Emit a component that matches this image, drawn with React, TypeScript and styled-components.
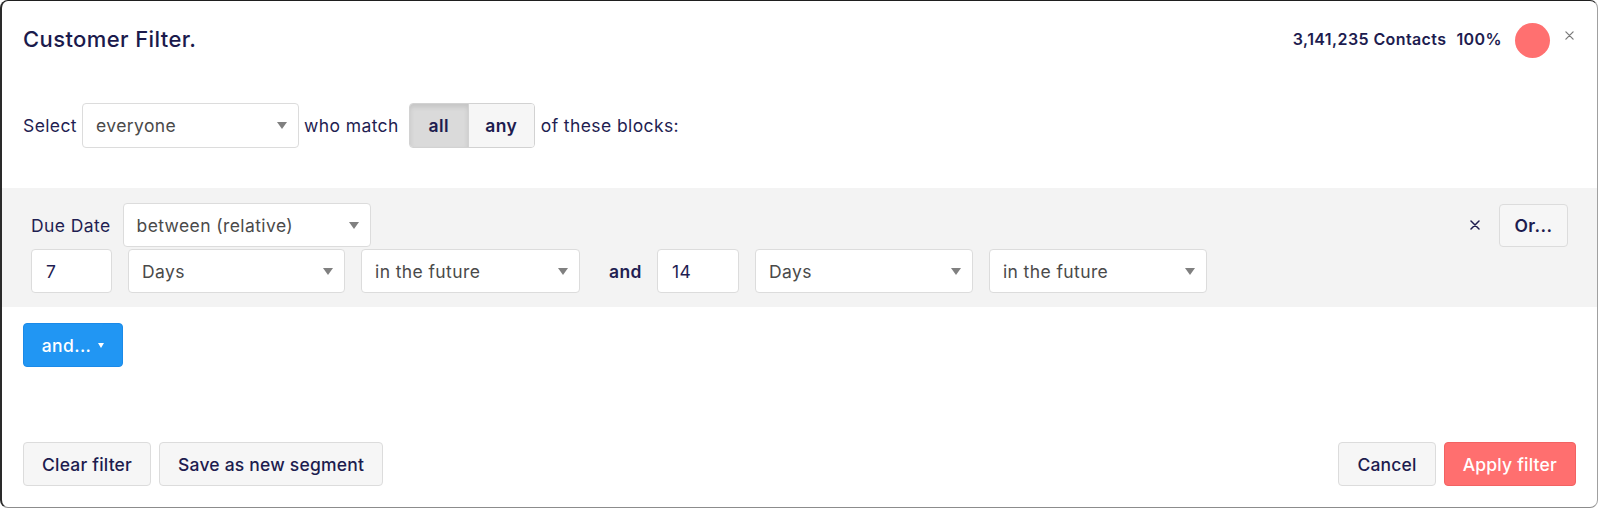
import React from 'react';
import styled, { createGlobalStyle } from 'styled-components';

const GlobalStyle = createGlobalStyle`
	html, body {
		margin: 0;
		padding: 0;
		background: #ffffff;
	}
	body {
		font-family: Inter, 'Liberation Sans', sans-serif;
		color: #1d1c4f;
		-webkit-font-smoothing: antialiased;
	}
	* {
		box-sizing: border-box;
	}
`;

const Modal = styled.div`
	height: calc(100vh - 1px);
	margin-right: 2px;
	background: #fff;
	border-style: solid;
	border-width: 1px 1px 1px 2px;
	border-color: #1f1f1f #a0a0a0 #8c8c8c #2a2a2a;
	border-radius: 8px;
	display: flex;
	flex-direction: column;
	letter-spacing: 0.4px;
`;

const Header = styled.div`
	height: 75px;
	padding: 0 23px 0 21px;
	display: flex;
	align-items: center;
	justify-content: space-between;
`;

const Title = styled.h1`
	margin: 0;
	font-size: 22px;
	font-weight: 500;
	color: #1b1a4c;
`;

const Stats = styled.div`
	display: flex;
	align-items: center;
	height: 100%;
	font-size: 16px;
	font-weight: 600;
`;

const Percent = styled.span`
	margin-left: 10px;
`;

const Dot = styled.span`
	width: 35px;
	height: 35px;
	border-radius: 50%;
	background: #ff7070;
	margin-left: 13px;
	margin-top: 3px;
`;

const CloseIcon = styled.svg`
	align-self: flex-start;
	margin: 30px 0 0 15px;
	display: block;
`;

const MatchRow = styled.div`
	margin-top: 27px;
	padding: 0 21px;
	display: flex;
	align-items: center;
	gap: 5px;
	font-size: 17.5px;
`;

const Label = styled.span<{ $bold?: boolean }>`
	font-size: 17.5px;
	font-weight: ${(props) => (props.$bold ? 600 : 400)};
	color: #1f1e52;
	white-space: nowrap;
`;

const SelectBox = styled.div<{ $width: number; $height?: number }>`
	width: ${(props) => props.$width}px;
	height: ${(props) => props.$height || 44}px;
	flex-shrink: 0;
	background: #fff;
	border: 1px solid #dcdcdc;
	border-radius: 4px;
	padding: 0 11px 0 13px;
	display: flex;
	align-items: center;
	justify-content: space-between;
	font-size: 17.5px;
	color: #4a4a4a;
`;

const Caret = styled.span<{ $color?: string; $size?: number }>`
	width: 0;
	height: 0;
	border-left: ${(props) => props.$size || 5}px solid transparent;
	border-right: ${(props) => props.$size || 5}px solid transparent;
	border-top: ${(props) => (props.$size || 5) + 2}px solid ${(props) => props.$color || '#808080'};
`;

const Toggle = styled.div`
	display: flex;
	height: 45px;
	margin: 0 1px 0 5px;
	border: 1px solid #d2d2d2;
	border-radius: 4px;
	overflow: hidden;
`;

const ToggleItem = styled.div<{ $active?: boolean; $width: number }>`
	width: ${(props) => props.$width}px;
	display: flex;
	align-items: center;
	justify-content: center;
	font-size: 17.5px;
	font-weight: 600;
	background: ${(props) => (props.$active ? '#dadada' : '#f6f6f6')};
	box-shadow: ${(props) => (props.$active ? 'inset 0 3px 5px rgba(0,0,0,0.1)' : 'none')};
	& + & {
		border-left: 1px solid #d2d2d2;
	}
`;

const Block = styled.div`
	margin-top: 40px;
	background: #f3f3f3;
	padding: 15px 29px 14px 29px;
`;

const BlockHeader = styled.div`
	display: flex;
	align-items: center;
	gap: 12px;
`;

const BlockActions = styled.div`
	margin-left: auto;
	display: flex;
	align-items: center;
	gap: 19px;
`;

const ValueRow = styled.div`
	margin-top: 2px;
	display: flex;
	align-items: center;
	gap: 16px;
`;

const NumberInput = styled.div<{ $width: number }>`
	width: ${(props) => props.$width}px;
	height: 44px;
	background: #fff;
	border: 1px solid #dcdcdc;
	border-radius: 4px;
	padding-left: 14px;
	display: flex;
	align-items: center;
	font-size: 17.5px;
	color: #1f1e52;
`;

const AndLabel = styled(Label)`
	margin: 0 -1px 0 13px;
`;

const Button = styled.button<{ $primary?: boolean }>`
	height: 44px;
	padding: 0 18px;
	border-radius: 4px;
	border: 1px solid ${(props) => (props.$primary ? '#f26262' : '#dcdcdc')};
	background: ${(props) => (props.$primary ? '#ff6f6f' : '#f6f6f6')};
	color: ${(props) => (props.$primary ? '#fff' : '#1d1c4f')};
	font-family: inherit;
	font-size: 17.5px;
	font-weight: 500;
	letter-spacing: 0.2px;
	cursor: pointer;
	white-space: nowrap;
`;

const OrButton = styled(Button)`
	width: 69px;
	height: 43px;
	padding: 0;
	font-weight: 600;
	letter-spacing: 0.4px;
`;

const AddButton = styled.button`
	margin: 16px 0 0 21px;
	width: 100px;
	height: 44px;
	border-radius: 4px;
	border: 1px solid #1b8ae8;
	background: #2196f3;
	color: #fff;
	font-family: inherit;
	font-size: 17.5px;
	font-weight: 500;
	letter-spacing: 0.4px;
	display: flex;
	align-items: center;
	justify-content: center;
	gap: 7px;
	cursor: pointer;
`;

const Footer = styled.div`
	margin-top: auto;
	padding: 0 21px 21px 21px;
	display: flex;
	justify-content: space-between;
`;

const ButtonGroup = styled.div`
	display: flex;
	gap: 8px;
`;

function Cross({ size, color, width }: { size: number; color: string; width: number }) {
	return (
		<svg width={size} height={size} viewBox="0 0 10 10">
			<path d="M1 1 L9 9 M9 1 L1 9" stroke={color} strokeWidth={width} strokeLinecap="round" />
		</svg>
	);
}

function Select({ value, width }: { value: string; width: number }) {
	return (
		<SelectBox $width={width}>
			<span>{value}</span>
			<Caret />
		</SelectBox>
	);
}

export default function App() {
	return (
		<>
			<GlobalStyle />
			<Modal>
				<Header>
					<Title>Customer Filter.</Title>
					<Stats>
						<span>3,141,235 Contacts</span>
						<Percent>100%</Percent>
						<Dot />
						<CloseIcon width="9" height="9" viewBox="0 0 10 10">
							<path d="M1 1 L9 9 M9 1 L1 9" stroke="#7a7a7a" strokeWidth="1.4" strokeLinecap="round" />
						</CloseIcon>
					</Stats>
				</Header>

				<MatchRow>
					<Label>Select</Label>
					<SelectBox $width={217} $height={45}>
						<span>everyone</span>
						<Caret />
					</SelectBox>
					<Label>who match</Label>
					<Toggle>
						<ToggleItem $active $width={58}>all</ToggleItem>
						<ToggleItem $width={66}>any</ToggleItem>
					</Toggle>
					<Label>of these blocks:</Label>
				</MatchRow>

				<Block>
					<BlockHeader>
						<Label>Due Date</Label>
						<Select value="between (relative)" width={248} />
						<BlockActions>
							<Cross size={10} color="#1d1c4f" width={1.5} />
							<OrButton>Or...</OrButton>
						</BlockActions>
					</BlockHeader>
					<ValueRow>
						<NumberInput $width={81}>7</NumberInput>
						<Select value="Days" width={217} />
						<Select value="in the future" width={219} />
						<AndLabel $bold>and</AndLabel>
						<NumberInput $width={82}>14</NumberInput>
						<Select value="Days" width={218} />
						<Select value="in the future" width={218} />
					</ValueRow>
				</Block>

				<div>
					<AddButton>
						and...
						<Caret $color="#fff" $size={3} />
					</AddButton>
				</div>

				<Footer>
					<ButtonGroup>
						<Button>Clear filter</Button>
						<Button>Save as new segment</Button>
					</ButtonGroup>
					<ButtonGroup>
						<Button>Cancel</Button>
						<Button $primary>Apply filter</Button>
					</ButtonGroup>
				</Footer>
			</Modal>
		</>
	);
}
